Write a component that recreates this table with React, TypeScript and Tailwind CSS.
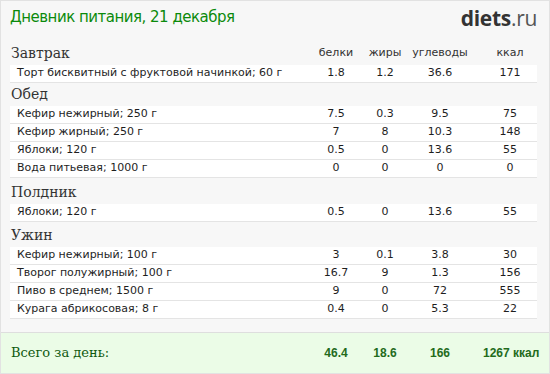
type Item = { name: string; p: string; f: string; c: string; k: string };

type Meal = { title: string; head: string; items: Item[] };

const meals: Meal[] = [
  {
    title: 'Завтрак',
    head: 'h-[24px]',
    items: [{ name: 'Торт бисквитный с фруктовой начинкой; 60 г', p: '1.8', f: '1.2', c: '36.6', k: '171' }],
  },
  {
    title: 'Обед',
    head: 'h-[23px]',
    items: [
      { name: 'Кефир нежирный; 250 г', p: '7.5', f: '0.3', c: '9.5', k: '75' },
      { name: 'Кефир жирный; 250 г', p: '7', f: '8', c: '10.3', k: '148' },
      { name: 'Яблоки; 120 г', p: '0.5', f: '0', c: '13.6', k: '55' },
      { name: 'Вода питьевая; 1000 г', p: '0', f: '0', c: '0', k: '0' },
    ],
  },
  {
    title: 'Полдник',
    head: 'h-[26px]',
    items: [{ name: 'Яблоки; 120 г', p: '0.5', f: '0', c: '13.6', k: '55' }],
  },
  {
    title: 'Ужин',
    head: 'h-[25px]',
    items: [
      { name: 'Кефир нежирный; 100 г', p: '3', f: '0.1', c: '3.8', k: '30' },
      { name: 'Творог полужирный; 100 г', p: '16.7', f: '9', c: '1.3', k: '156' },
      { name: 'Пиво в среднем; 1500 г', p: '9', f: '0', c: '72', k: '555' },
      { name: 'Курага абрикосовая; 8 г', p: '0.4', f: '0', c: '5.3', k: '22' },
    ],
  },
];

const sans = "font-['DejaVu_Sans',Verdana,sans-serif]";
const serif = "font-['DejaVu_Serif',Georgia,serif]";

// the four number columns share these widths everywhere
const Cols = ({ p, f, c, k, className }: { p: string; f: string; c: string; k: string; className?: string }) => (
  <>
    <div className={`w-[48px] text-center ${className ?? ''}`}>{p}</div>
    <div className={`w-[50px] text-center ${className ?? ''}`}>{f}</div>
    <div className={`w-[60px] text-center ${className ?? ''}`}>{c}</div>
    <div className={`w-[67px] pl-[13px] text-center ${className ?? ''}`}>{k}</div>
  </>
);

const Row = ({ item }: { item: Item }) => (
  <div className={`flex h-[18px] items-center bg-white border-b border-[#e4e4e4] text-[11px] text-[#1e1e1e] ${sans}`}>
    <div className="flex-1 pl-[7px] whitespace-nowrap">{item.name}</div>
    <Cols p={item.p} f={item.f} c={item.c} k={item.k} />
  </div>
);

export default function App() {
  return (
    <div className="w-[550px] h-[374px] flex flex-col bg-[#f7f7f7] border border-[#e2e2e2] overflow-hidden">
      {/* Header */}
      <div className="h-[40px] flex items-start justify-between pl-[9px] pr-[12px] pt-[5px]">
        <h1 className={`text-[15px] tracking-[-0.5px] text-[#0b8a0b] leading-[22px] ${sans}`}>Дневник питания, 21 декабря</h1>
        <div className="font-['Open_Sans',sans-serif] text-[21px] leading-[24px] tracking-[-0.3px]">
          <span className="font-bold text-[#333]">diets</span>
          <span className="text-[#555]">.ru</span>
        </div>
      </div>

      {/* Meals */}
      <div className="pl-[9px] pr-[12px]">
        {meals.map((meal, i) => (
          <div key={meal.title}>
            <div className={`${meal.head} flex items-end pb-[3px]`}>
              <div className={`flex-1 pl-[1px] text-[14px] leading-[18px] text-[#333] ${serif}`}>{meal.title}</div>
              {i === 0 && (
                <div className={`flex pb-[1px] text-[11px] text-[#333] ${sans}`}>
                  <Cols p="белки" f="жиры" c="углеводы" k="ккал" />
                </div>
              )}
            </div>
            {meal.items.map((item, j) => (
              <Row key={j} item={item} />
            ))}
          </div>
        ))}
      </div>

      {/* Day total */}
      <div className="mt-auto h-[41px] border-t border-[#dedede] bg-[#ebfce7] flex items-center pl-[9px] pr-[12px]">
        <div className={`flex-1 pl-[1px] text-[13px] text-[#0f5a0f] ${serif}`}>Всего за день:</div>
        <Cols
          p="46.4"
          f="18.6"
          c="166"
          k="1267 ккал"
          className="font-['Liberation_Sans',Arial,sans-serif] font-bold text-[12px] text-[#236b1c] whitespace-nowrap"
        />
      </div>
    </div>
  );
}
